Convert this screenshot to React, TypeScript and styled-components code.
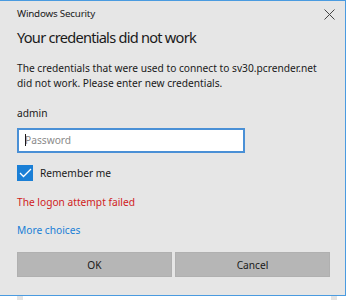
import styled, { createGlobalStyle } from 'styled-components';

const Global = createGlobalStyle`
	html, body {
		margin: 0;
		padding: 0;
		background: #ffffff;
		width: 350px;
		height: 300px;
		overflow: hidden;
	}
	body {
		font-family: "Segoe UI", "Noto Sans", "Open Sans", sans-serif;
	}
`;

const Dialog = styled.div`
	width: 346px;
	height: 296px;
	box-sizing: border-box;
	background: #e6e6e6;
	border-top: 1px solid #4a9be0;
	border-right: 1px solid #4a9be0;
	border-bottom: 1px solid #4a9be0;
	display: flex;
	flex-direction: column;
	padding-left: 17px;
`;

const TitleBar = styled.div`
	display: flex;
	align-items: center;
	justify-content: space-between;
	height: 24px;
	padding-right: 9px;
`;

const Caption = styled.span`
	font-size: 9.8px;
	color: #1a1a1a;
	letter-spacing: -0.2px;
`;

const Close = styled.button`
	width: 13px;
	height: 13px;
	padding: 0;
	border: none;
	background: none;
	display: flex;
	align-items: center;
	justify-content: center;
	margin-top: 2px;
`;

const Heading = styled.h1`
	margin: 0;
	font-size: 14.6px;
	font-weight: 400;
	line-height: 24px;
	color: #1a1a1a;
	letter-spacing: -0.75px;
	white-space: nowrap;
`;

const Text = styled.p<{ $top: number; $color?: string }>`
	margin: ${(p) => p.$top}px 0 0;
	font-size: 10.2px;
	line-height: 15px;
	color: ${(p) => p.$color || '#1a1a1a'};
	white-space: nowrap;
`;

const Field = styled.div`
	margin-top: 6px;
	width: 228px;
	height: 25px;
	position: relative;

	&::before {
		content: '';
		position: absolute;
		left: 8px;
		top: 7px;
		width: 1px;
		height: 12px;
		background: #1a1a1a;
	}
`;

const Input = styled.input`
	width: 100%;
	height: 100%;
	box-sizing: border-box;
	border: 2px solid #4a90d6;
	background: #ffffff;
	font-family: inherit;
	font-size: 10.2px;
	padding: 0 6px;
	outline: none;

	&::placeholder {
		color: #8a8a8a;
	}
`;

const CheckRow = styled.label`
	display: flex;
	align-items: center;
	gap: 7px;
	margin-top: 13px;
	font-size: 10.2px;
	color: #1a1a1a;
	height: 16px;
`;

const Box = styled.span`
	width: 16px;
	height: 16px;
	background: #1a7fd6;
	display: flex;
	align-items: center;
	justify-content: center;
`;

const Buttons = styled.div`
	display: flex;
	gap: 3px;
	margin-top: 14px;
`;

const Button = styled.button`
	width: 155px;
	height: 25px;
	border: 1px solid #b0b0b0;
	background: #b6b6b6;
	font-family: inherit;
	font-size: 10.2px;
	color: #1a1a1a;
	padding: 0;
`;

const Behind = styled.div`
	height: 4px;
	margin-left: 17px;
	width: 308px;
	border-left: 6px solid #e4e4e4;
	border-right: 6px solid #e4e4e4;
`;

export default function App() {
	return (
		<>
			<Global />
			<Dialog>
				<TitleBar>
					<Caption>Windows Security</Caption>
					<Close aria-label='Close'>
						<svg width='11' height='11' viewBox='0 0 11 11'>
							<path d='M0.5 0.5 L10.5 10.5 M10.5 0.5 L0.5 10.5' stroke='#444' strokeWidth='1' />
						</svg>
					</Close>
				</TitleBar>
				<Heading>Your credentials did not work</Heading>
				<Text $top={12}>
					The credentials that were used to connect to sv30.pcrender.net
					<br />
					did not work. Please enter new credentials.
				</Text>
				<Text $top={15}>admin</Text>
				<Field>
					<Input type='password' placeholder='Password' />
				</Field>
				<CheckRow>
					<Box>
						<svg width='13' height='10' viewBox='0 0 13 10'>
							<path d='M1 5 L4.5 8.5 L12 1' stroke='#fff' strokeWidth='1.3' fill='none' />
						</svg>
					</Box>
					Remember me
				</CheckRow>
				<Text $top={14} $color='#d01c1c'>
					The logon attempt failed
				</Text>
				<Text $top={13} $color='#1a7fd6'>
					More choices
				</Text>
				<Buttons>
					<Button>OK</Button>
					<Button>Cancel</Button>
				</Buttons>
			</Dialog>
			<Behind />
		</>
	);
}
